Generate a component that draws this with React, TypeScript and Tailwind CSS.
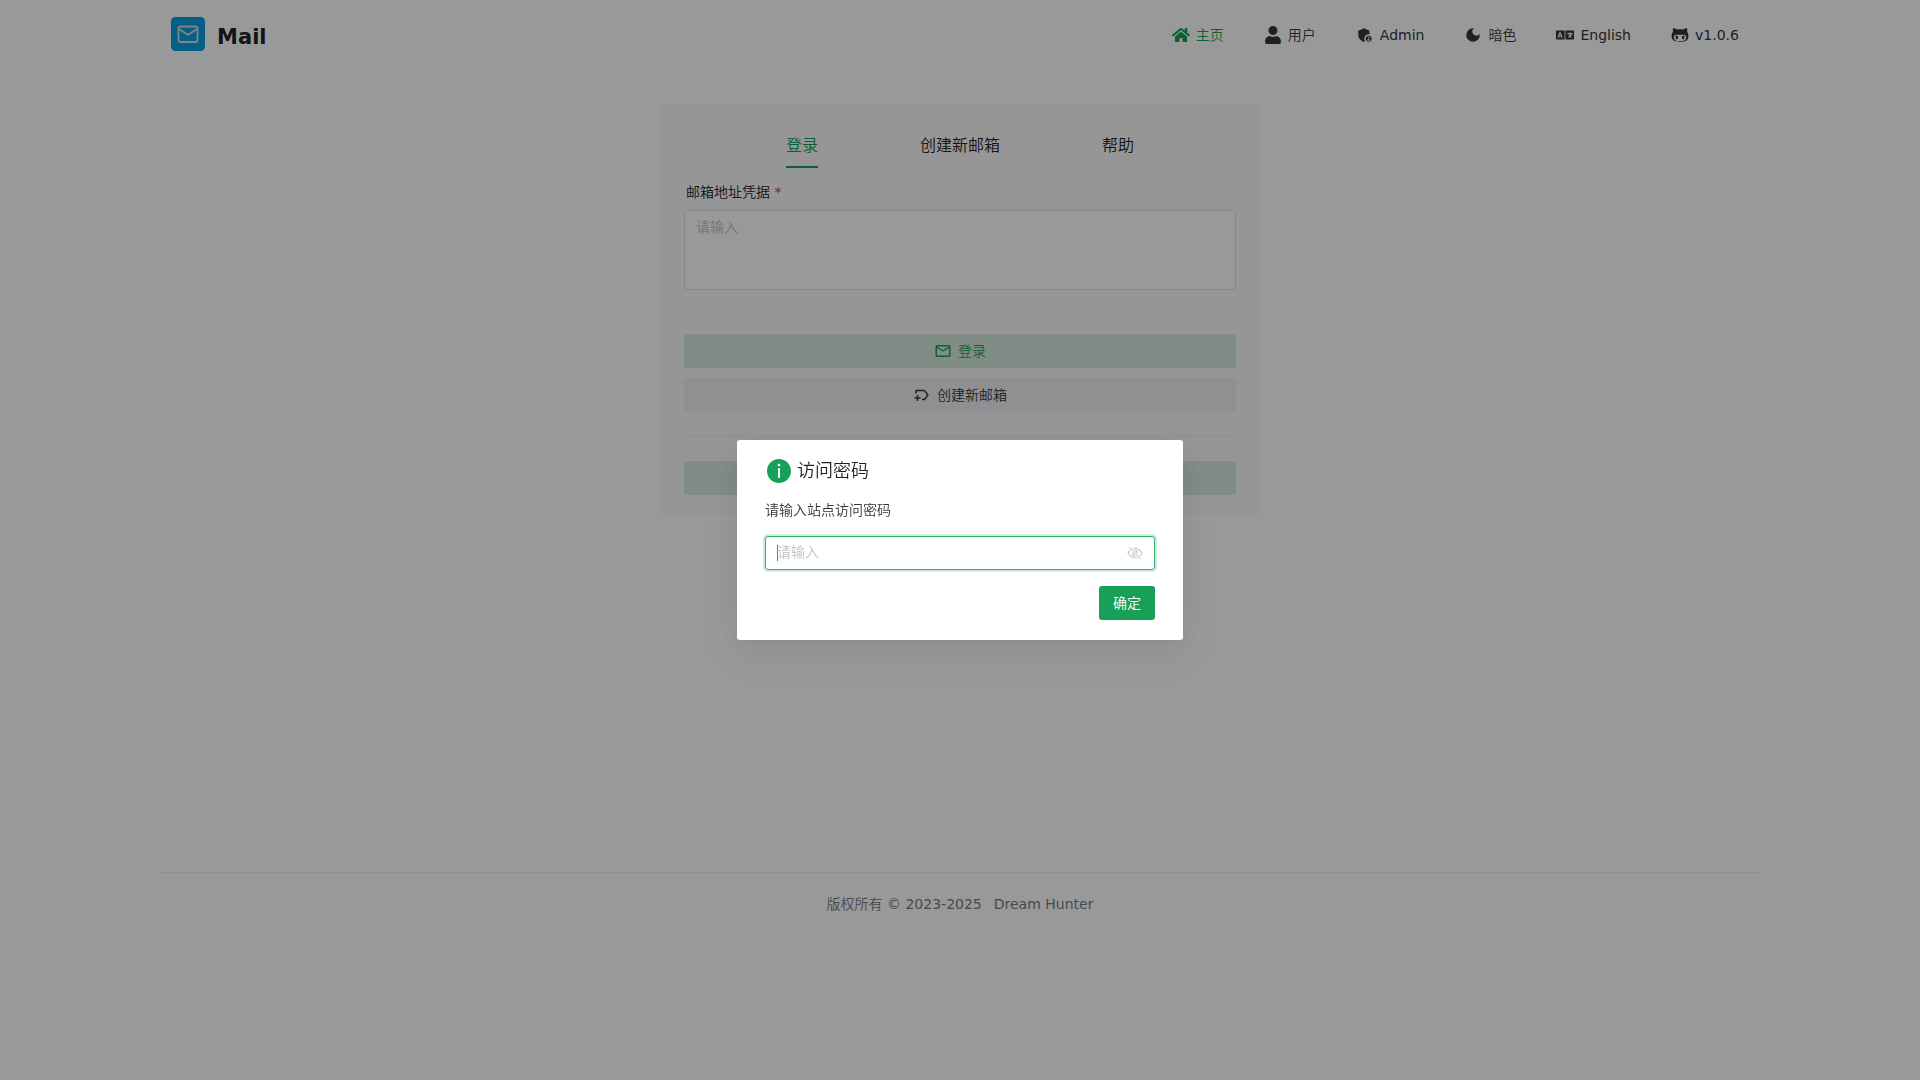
import type { ReactNode } from "react";
import { FaGithubAlt, FaHome, FaLanguage, FaUser } from "react-icons/fa";
import { IoEyeOffOutline } from "react-icons/io5";
import {
  MdAdminPanelSettings,
  MdDarkMode,
  MdOutlineEmail,
  MdOutlineNewLabel,
} from "react-icons/md";

type NavItem = { label: string; icon: ReactNode; active?: boolean };

const navItems: NavItem[] = [
  { label: "主页", icon: <FaHome />, active: true },
  { label: "用户", icon: <FaUser /> },
  { label: "Admin", icon: <MdAdminPanelSettings /> },
  { label: "暗色", icon: <MdDarkMode /> },
  { label: "English", icon: <FaLanguage /> },
  { label: "v1.0.6", icon: <FaGithubAlt /> },
];

const tabs = ["登录", "创建新邮箱", "帮助"];

function Logo() {
  return (
    <svg viewBox="0 0 34 34" className="size-[34px]" aria-hidden="true">
      <rect width="34" height="34" rx="4.5" fill="#08a0e0" />
      <rect x="7.5" y="9.5" width="19" height="15.5" rx="2" fill="none" stroke="#dcdcdc" strokeWidth="1.8" />
      <path d="M8 12 L17 18 L26 12" fill="none" stroke="#dcdcdc" strokeWidth="1.8" />
    </svg>
  );
}

function InfoIcon() {
  return (
    <svg viewBox="0 0 28 28" className="size-7" fill="#18a058" aria-hidden="true">
      <path
        fillRule="evenodd"
        d="M14 2C20.6274 2 26 7.37258 26 14C26 20.6274 20.6274 26 14 26C7.37258 26 2 20.6274 2 14C2 7.37258 7.37258 2 14 2ZM14 11C13.4477 11 13 11.4477 13 12V20C13 20.5523 13.4477 21 14 21C14.5523 21 15 20.5523 15 20V12C15 11.4477 14.5523 11 14 11ZM14 6.75C13.3096 6.75 12.75 7.30964 12.75 8C12.75 8.69036 13.3096 9.25 14 9.25C14.6904 9.25 15.25 8.69036 15.25 8C15.25 7.30964 14.6904 6.75 14 6.75Z"
      />
    </svg>
  );
}

function Header() {
  return (
    <header className="flex h-[70px] items-center justify-between pl-2.5 pr-5">
      <div className="flex items-center gap-3 pb-0.5">
        <Logo />
        <h1 className="pt-1.5 text-[21px] font-bold text-[#1f2225]">Mail</h1>
      </div>
      <nav className="flex items-center gap-10">
        {navItems.map((item) => (
          <button
            key={item.label}
            type="button"
            className={
              item.active
                ? "flex items-center gap-1.5 text-[#18a058]"
                : "flex items-center gap-1.5 text-[#333639]"
            }
          >
            <span className="text-lg leading-none">{item.icon}</span>
            {item.label}
          </button>
        ))}
      </nav>
    </header>
  );
}

function LoginCard() {
  return (
    <section className="mx-auto mt-[34px] w-full max-w-[600px] rounded-[3px] bg-[#fafafc] px-6 pt-6 pb-5">
      <div role="tablist" className="flex justify-evenly text-base leading-6 text-[#1f2225]">
        {tabs.map((tab, i) => (
          <button
            key={tab}
            type="button"
            role="tab"
            aria-selected={i === 0}
            className={
              i === 0
                ? "border-b-2 border-[#18a058] pt-1.5 pb-2 text-[#18a058]"
                : "border-b-2 border-transparent pt-1.5 pb-2"
            }
          >
            {tab}
          </button>
        ))}
      </div>
      <form className="flex flex-col pt-[13px]">
        <label htmlFor="credential" className="pl-0.5 text-[#1f2225]">
          邮箱地址凭据 <span className="text-[#d03050]">*</span>
        </label>
        <textarea
          id="credential"
          placeholder="请输入"
          className="mt-[7px] h-20 resize-none rounded-[3px] border border-[#e0e0e6] bg-white px-[11px] py-[5px] placeholder:text-[#c2c2c2]"
        />
        <button
          type="button"
          className="mt-11 flex h-[34px] items-center justify-center gap-1.5 rounded-[3px] bg-[#18a058]/16 text-[#18a058]"
        >
          <MdOutlineEmail className="size-[18px]" />
          登录
        </button>
        <button
          type="button"
          className="mt-2.5 flex h-[34px] items-center justify-center gap-1.5 rounded-[3px] bg-[#f0f0f3] text-[#333639]"
        >
          <MdOutlineNewLabel className="size-[18px]" />
          创建新邮箱
        </button>
        <hr className="my-6 border-[#efeff5]" />
        <button type="button" aria-label="Passkey" className="h-[34px] rounded-[3px] bg-[#18a058]/16" />
      </form>
    </section>
  );
}

function Footer() {
  return (
    <footer className="mt-[357px] flex justify-center gap-3 border-t border-[#efeff5] py-5 text-[#767c82]">
      <span>版权所有 © 2023-2025</span>
      <a href="#dream-hunter">Dream Hunter</a>
    </footer>
  );
}

function PasswordDialog() {
  return (
    <div className="fixed inset-0 flex items-center justify-center bg-black/40">
      <div
        role="dialog"
        aria-modal="true"
        aria-labelledby="dialog-title"
        className="w-[446px] rounded-[3px] bg-white px-7 pt-[17px] pb-5 shadow-[0_6px_16px_-9px_rgba(0,0,0,0.08),0_9px_28px_0_rgba(0,0,0,0.05),0_12px_48px_16px_rgba(0,0,0,0.03)]"
      >
        <div className="flex h-7 items-center gap-1">
          <InfoIcon />
          <h2 id="dialog-title" className="text-lg leading-7 text-[#1f2225]">
            访问密码
          </h2>
        </div>
        <label htmlFor="site-password" className="mt-3.5 block text-[#333639]">
          请输入站点访问密码
        </label>
        <div className="mt-[15px] flex h-[34px] items-center rounded-[3px] border border-[#36ad6a] px-[11px] shadow-[0_0_0_2px_rgba(24,160,88,0.2)]">
          <span className="h-4 w-px bg-[#18a058]" />
          <input
            id="site-password"
            type="password"
            placeholder="请输入"
            className="-ml-px min-w-0 flex-1 bg-transparent pb-0.5 outline-none placeholder:text-[#c2c2c2]"
          />
          <button type="button" aria-label="显示密码" className="text-[#c2c2c2]">
            <IoEyeOffOutline className="size-4" />
          </button>
        </div>
        <div className="mt-4 flex justify-end">
          <button type="button" className="h-[34px] rounded-[3px] bg-[#18a058] px-3.5 text-white">
            确定
          </button>
        </div>
      </div>
    </div>
  );
}

export default function App() {
  return (
    <div className="min-h-screen bg-white px-[8.39%] font-['DejaVu_Sans','Noto_Sans_CJK_SC_DemiLight','Noto_Sans_CJK_SC_Light','Noto_Sans_CJK_SC',sans-serif] text-sm leading-[22px]">
      <Header />
      <main>
        <LoginCard />
      </main>
      <Footer />
      <PasswordDialog />
    </div>
  );
}
